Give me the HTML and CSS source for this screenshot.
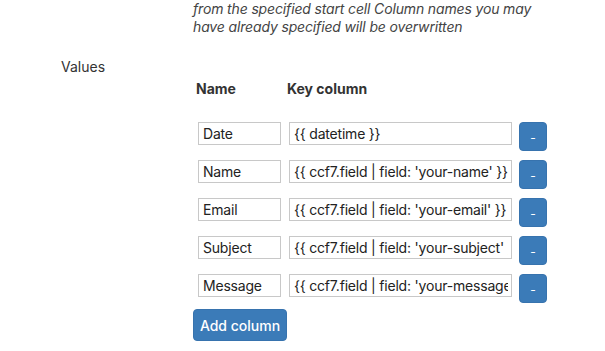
FILE: index.html
```html
<!DOCTYPE html>
<html lang="en">

<head>
    <meta charset="UTF-8">
    <meta name="viewport" content="width=device-width, initial-scale=1.0">
    <title>Sheet values</title>
    <link rel="stylesheet" href="styles.css">
</head>

<body>
    <div class="form-row">
        <div class="form-label"></div>
        <div class="form-field">
            <p class="help-text">from the specified start cell Column names you may have already specified will be overwritten</p>
        </div>
    </div>

    <div class="form-row">
        <div class="form-label">Values</div>
        <div class="form-field">
            <div class="columns-head">
                <span class="head-name">Name</span>
                <span class="head-key">Key column</span>
            </div>

            <div class="column-row">
                <input class="input-name" type="text" value="Date">
                <input class="input-key" type="text" value="{{ datetime }}">
                <button class="btn btn-remove">-</button>
            </div>
            <div class="column-row">
                <input class="input-name" type="text" value="Name">
                <input class="input-key" type="text" value="{{ ccf7.field | field: 'your-name' }}">
                <button class="btn btn-remove">-</button>
            </div>
            <div class="column-row">
                <input class="input-name" type="text" value="Email">
                <input class="input-key" type="text" value="{{ ccf7.field | field: 'your-email' }}">
                <button class="btn btn-remove">-</button>
            </div>
            <div class="column-row">
                <input class="input-name" type="text" value="Subject">
                <input class="input-key" type="text" value="{{ ccf7.field | field: 'your-subject' }}">
                <button class="btn btn-remove">-</button>
            </div>
            <div class="column-row">
                <input class="input-name" type="text" value="Message">
                <input class="input-key" type="text" value="{{ ccf7.field | field: 'your-message' }}">
                <button class="btn btn-remove">-</button>
            </div>

            <button class="btn btn-add">Add column</button>
        </div>
    </div>
</body>

</html>
```

FILE: styles.css
```css
body {
    font-family: 'Inter', 'Noto Sans', sans-serif;
    font-size: 14px;
    line-height: 19px;
    color: #333;
    background: #fff;
    margin: 0;
    padding: 0;
}

.form-row {
    display: flex;
}

.form-label {
    width: 132px;
    padding-left: 61px;
    flex-shrink: 0;
}

.form-field {
    width: 360px;
}

.help-text {
    margin: 0 0 21px;
    font-style: italic;
    line-height: 18px;
    color: #444;
    letter-spacing: -0.15px;
}

.columns-head {
    display: flex;
    font-weight: bold;
    padding: 22px 0 0 3px;
    margin-bottom: 24px;
}

.head-name {
    width: 91px;
}

.column-row {
    display: flex;
    align-items: flex-start;
    padding-left: 5px;
    height: 38px;
}

.column-row input {
    font-family: inherit;
    font-size: 14px;
    letter-spacing: -0.2px;
    color: #222;
    height: 23px;
    box-sizing: border-box;
    border: 1px solid #c8c8c8;
    border-radius: 0;
    padding: 0 3px 0 4px;
    margin: 0;
    background: #fff;
}

.input-name {
    width: 83px;
    margin-right: 8px !important;
}

.input-key {
    width: 223px;
    margin-right: 7px !important;
}

.btn {
    font-family: inherit;
    font-size: 14px;
    color: #fff;
    background: #3b7bb8;
    border: 1px solid #3773ae;
    border-radius: 4px;
    cursor: pointer;
    box-sizing: border-box;
    margin: 0;
}

.btn-remove {
    width: 28px;
    height: 29px;
    padding: 2px 0 0;
    font-size: 12px;
    line-height: 25px;
}

.btn-add {
    width: 94px;
    height: 32px;
    padding: 0;
    font-weight: 500;
    margin-top: -3px;
}
```
